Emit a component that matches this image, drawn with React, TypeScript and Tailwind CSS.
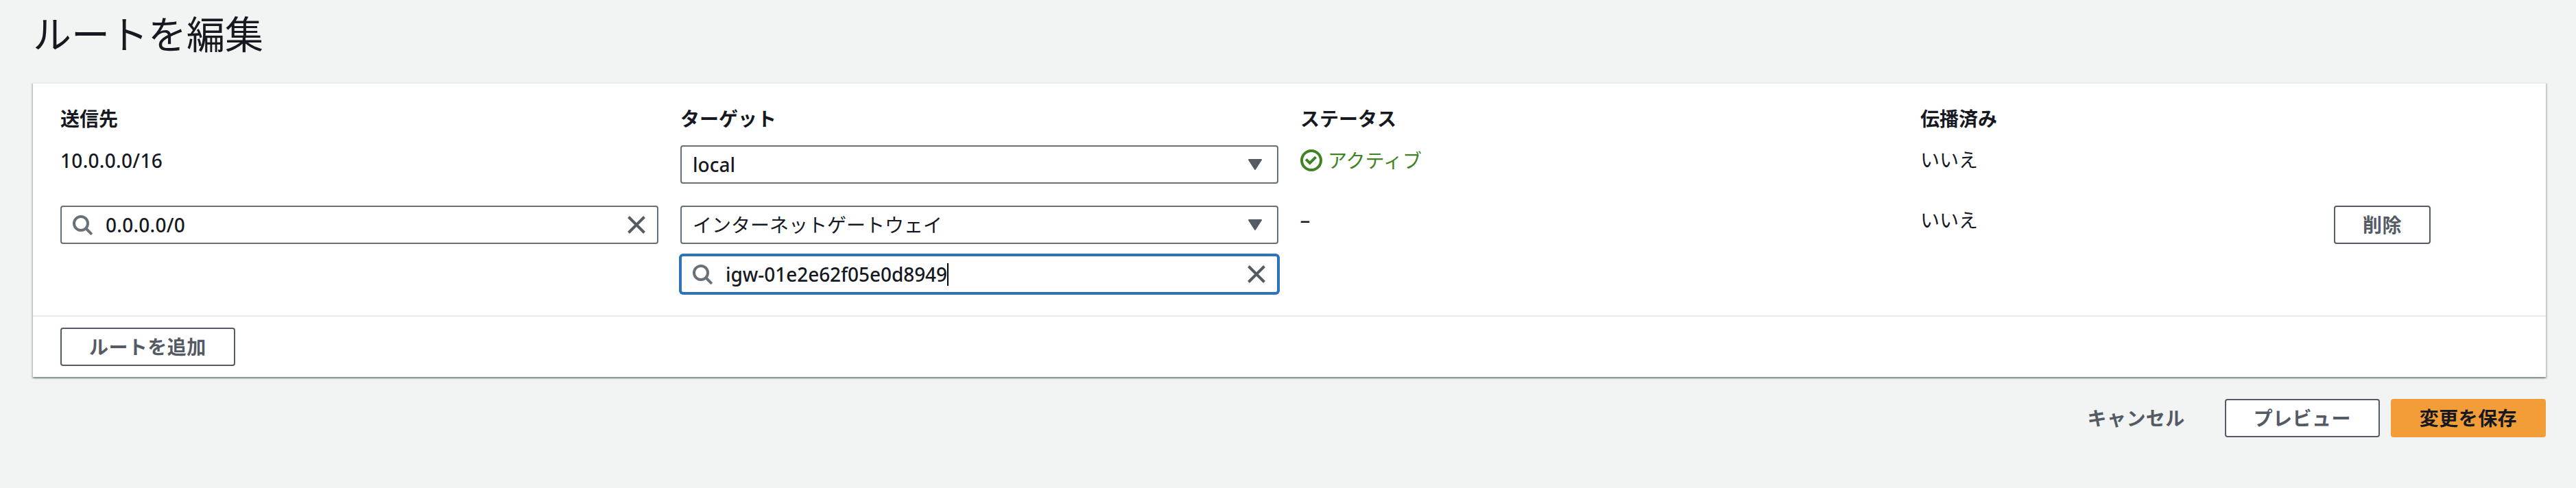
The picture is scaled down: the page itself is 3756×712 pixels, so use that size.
import type { ReactNode } from "react";
import clsx from "clsx";

function SearchIcon() {
  return (
    <svg className="ml-4 size-8 shrink-0" viewBox="0 0 32 32" fill="none" stroke="#687078" strokeWidth="4">
      <circle cx="12" cy="14" r="10" />
      <path d="M19 21l8.8 8.8" />
    </svg>
  );
}

function CloseIcon() {
  return (
    <svg className="mr-[17px] size-[26px] shrink-0" viewBox="0 0 26 26" fill="none" stroke="#545b64" strokeWidth="4">
      <path d="M1.5 1.5l23 23M24.5 1.5l-23 23" />
    </svg>
  );
}

function CheckIcon() {
  return (
    <svg className="size-8 shrink-0" viewBox="0 0 32 32" fill="none" stroke="#3f8423" strokeWidth="4">
      <circle cx="16" cy="16" r="14" />
      <path d="M8.2 14.4l5.6 5.6 8.8-8.8" />
    </svg>
  );
}

function Select({ value }: { value: string }) {
  return (
    <div className="flex h-14 items-center justify-between rounded-[4px] border-2 border-[#687078] bg-white pl-4 pr-[22px]">
      <span>{value}</span>
      <svg className="h-4 w-5" viewBox="0 0 20 16" fill="#545b64" stroke="#545b64" strokeWidth="2" strokeLinejoin="round">
        <path d="M1 1h18l-9 14z" />
      </svg>
    </div>
  );
}

function SearchInput({ value, focused = false }: { value: string; focused?: boolean }) {
  return (
    <div
      className={clsx(
        "flex h-14 items-center rounded-[4px] border-2 bg-white",
        focused ? "border-[#2e73b8] tracking-[-0.06px] ring-2 ring-[#2e73b8]" : "border-[#687078] tracking-[0.25px]"
      )}
    >
      <SearchIcon />
      <span className="ml-4 flex flex-1 items-center font-medium">
        {value}
        {focused && <span className="h-[33px] w-[2px] bg-black" />}
      </span>
      <CloseIcon />
    </div>
  );
}

function Button({ children, variant = "normal" }: { children: ReactNode; variant?: "normal" | "link" | "primary" }) {
  return (
    <button
      className={clsx(
        "h-14 rounded-[4px] border-2 px-10 text-[28px] leading-[40px] font-bold tracking-[0.43px]",
        variant === "normal" && "border-[#545b64] bg-white text-[#545b64]",
        variant === "link" && "border-transparent text-[#545b64]",
        variant === "primary" && "border-[#f29d38] bg-[#f29d38] text-[#16191f]"
      )}
    >
      {children}
    </button>
  );
}

const headers = ["送信先", "ターゲット", "ステータス", "伝播済み"];

export default function App() {
  return (
    <main className="h-[712px] bg-[#f2f3f3] pl-12 pr-11 pt-[13px] font-['Noto_Sans','Noto_Sans_CJK_JP',sans-serif] text-[28px] leading-[44px] text-[#16191f]">
      <h1 className="text-[56px] leading-[72px]">ルートを編集</h1>

      <section className="mt-[35px] border-t-2 border-[#eaeded] bg-white shadow-[0_2px_2px_0_rgba(0,28,36,0.3),2px_2px_2px_0_rgba(0,28,36,0.15),-2px_2px_2px_0_rgba(0,28,36,0.15)]">
        <div className="px-10 pb-8 pt-[29px]">
          <div className="grid grid-cols-[repeat(3,872px)_571px_141px] gap-x-8">
            {headers.map((header) => (
              <div key={header} className="font-bold">{header}</div>
            ))}
          </div>

          <div className="mt-[17px] grid grid-cols-[repeat(3,872px)_571px_141px] gap-x-8">
            <div className="font-medium tracking-[0.3px]">10.0.0.0/16</div>
            <div className="font-medium">
              <Select value="local" />
            </div>
            <div className="flex h-11 items-center gap-2 text-[#3f8423]">
              <CheckIcon />
              <span>アクティブ</span>
            </div>
            <div className="-mt-px">いいえ</div>
          </div>

          <div className="mt-8 grid grid-cols-[repeat(3,872px)_571px_141px] gap-x-8">
            <SearchInput value="0.0.0.0/0" />
            <div className="flex flex-col gap-4">
              <Select value="インターネットゲートウェイ" />
              <SearchInput value="igw-01e2e62f05e0d8949" focused />
            </div>
            <div className="font-['Liberation_Sans',sans-serif] text-[25px] font-bold">–</div>
            <div className="-mt-px">いいえ</div>
            <Button>削除</Button>
          </div>
        </div>

        <div className="flex border-t-2 border-[#eaeded] px-10 py-4">
          <Button>ルートを追加</Button>
        </div>
      </section>

      <div className="mt-8 flex justify-end gap-4">
        <Button variant="link">キャンセル</Button>
        <Button>プレビュー</Button>
        <Button variant="primary">変更を保存</Button>
      </div>
    </main>
  );
}
